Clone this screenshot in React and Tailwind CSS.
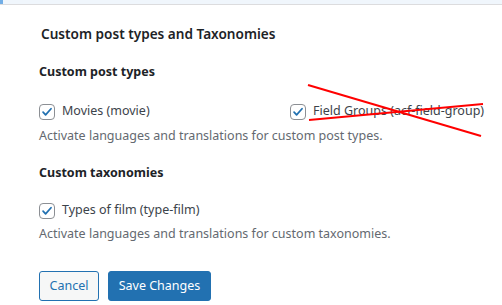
import React from "react";

const Check = ({ label }) => (
  <label className="flex items-center gap-[7px] text-[12.5px] text-[#3c434a]">
    <span className="w-4 h-4 rounded-[4px] border border-[#8c8f94] bg-white flex items-center justify-center">
      <svg viewBox="0 0 16 16" className="w-[14px] h-[14px]">
        <path d="M3.5 8.2l2.9 3L12.6 4.3" fill="none" stroke="#2271b1" strokeWidth="2" strokeLinecap="round" strokeLinejoin="round" />
      </svg>
    </span>
    <span>{label}</span>
  </label>
);

export default function App() {
  return (
    <div className="w-[502px] h-[305px] bg-white overflow-hidden relative" style={{ fontFamily: '"Noto Sans", sans-serif' }}>
      <div className="h-[5px] bg-[#f0f6fc] border-b border-[#dcdcde] flex">
        <div className="w-[3px] bg-[#72aee6]" />
      </div>

      <div className="pl-[39px] pt-[19px]">
        <h2 className="pl-[2px] text-[13.6px] font-semibold text-[#1d2327]">Custom post types and Taxonomies</h2>

        <h3 className="mt-[19px] text-[12.5px] font-bold text-[#1d2327]">Custom post types</h3>
        <div className="mt-[20px] flex">
          <div className="w-[251px]"><Check label="Movies (movie)" /></div>
          <Check label="Field Groups (acf-field-group)" />
        </div>
        <p className="mt-[6px] text-[12.5px] text-[#646970]">Activate languages and translations for custom post types.</p>

        <h3 className="mt-[18px] text-[12.5px] font-bold text-[#1d2327]">Custom taxonomies</h3>
        <div className="mt-[19px]"><Check label="Types of film (type-film)" /></div>
        <p className="mt-[5px] text-[12.5px] text-[#646970]">Activate languages and translations for custom taxonomies.</p>

        <div className="mt-[27px] flex gap-[9px]">
          <button className="h-[30px] w-[60px] rounded-[3px] border border-[#2271b1] bg-[#f6f7f7] text-[12.5px] text-[#2271b1]">Cancel</button>
          <button className="h-[30px] w-[103px] rounded-[3px] border border-[#2271b1] bg-[#2271b1] text-[12.5px] text-white">Save Changes</button>
        </div>
      </div>

      <svg className="absolute left-0 top-0 pointer-events-none" width="502" height="305">
        <line x1="308" y1="85" x2="481" y2="136" stroke="#ff0000" strokeWidth="2" />
        <line x1="309" y1="120" x2="483" y2="104" stroke="#ff0000" strokeWidth="2" />
      </svg>
    </div>
  );
}
